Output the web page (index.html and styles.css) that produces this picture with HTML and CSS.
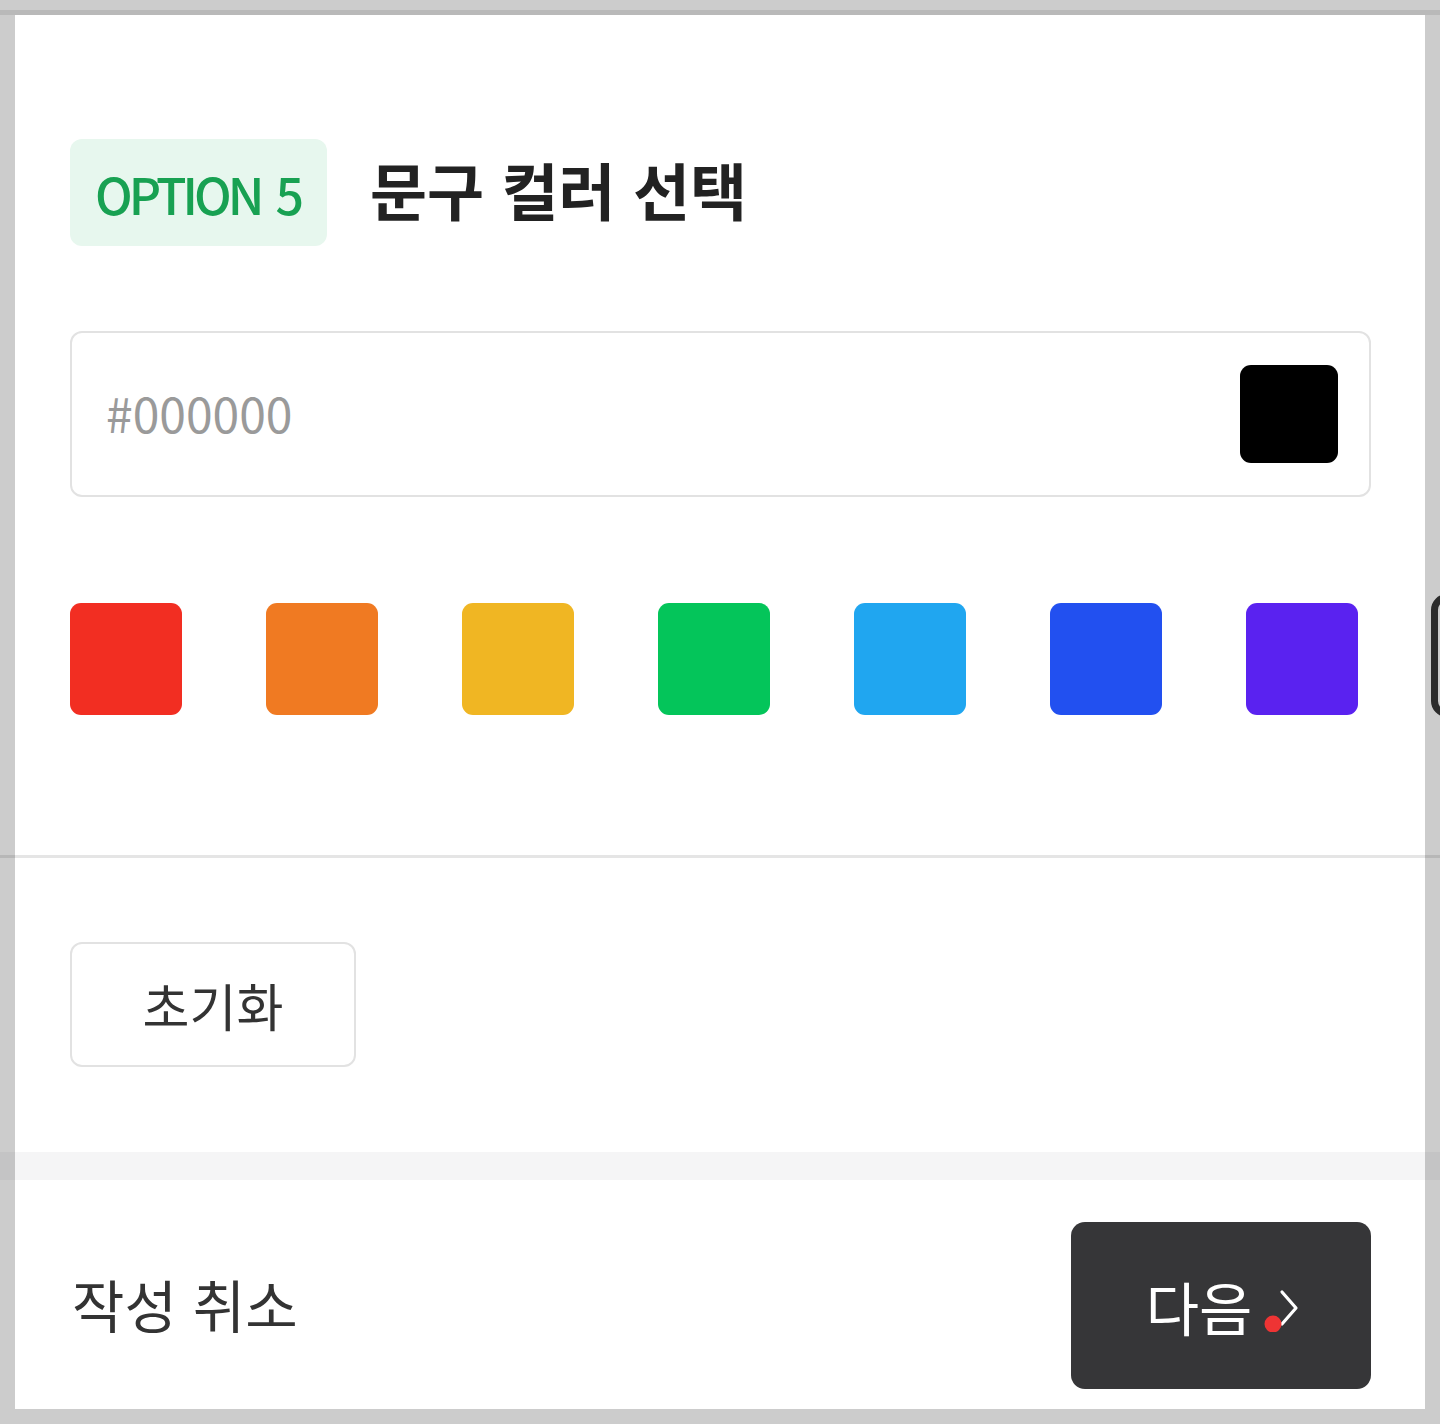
FILE: index.html
```html
<!DOCTYPE html>
<html lang="ko">
<head>
  <meta charset="UTF-8">
  <meta name="viewport" content="width=device-width, initial-scale=1.0">
  <title>문구 컬러 선택</title>
  <link rel="stylesheet" href="styles.css">
</head>
<body>
  <div class="top-line"></div>

  <div class="sheet">
    <!-- Option header -->
    <section class="option">
      <div class="option-head">
        <span class="badge">OPTION 5</span>
        <h1>문구 컬러 선택</h1>
      </div>

      <!-- Hex input with preview -->
      <div class="color-input">
        <input type="text" placeholder="#000000">
        <span class="preview"></span>
      </div>

      <!-- Preset colours -->
      <div class="swatches">
        <button class="swatch red"></button>
        <button class="swatch orange"></button>
        <button class="swatch yellow"></button>
        <button class="swatch green"></button>
        <button class="swatch sky"></button>
        <button class="swatch blue"></button>
        <button class="swatch purple"></button>
      </div>
    </section>

    <div class="divider"></div>

    <div class="reset-row">
      <button class="reset-button">초기화</button>
    </div>

    <div class="band"></div>

    <!-- Footer actions -->
    <footer class="actions">
      <button class="cancel">작성 취소</button>
      <button class="next">
        다음
        <span class="next-icon">
          <svg width="36" height="48" viewBox="0 0 36 48">
            <path d="M18 8 L32 24 L18 40" fill="none" stroke="#fff" stroke-width="3.2" stroke-linecap="round" stroke-linejoin="round"/>
            <circle cx="9" cy="40" r="8.5" fill="#ee3434"/>
          </svg>
        </span>
      </button>
    </footer>
  </div>

  <!-- edge of the selected swatch scrolled past the screen -->
  <div class="edge-swatch"></div>
</body>
</html>
```

FILE: styles.css
```css
* {
  margin: 0;
  padding: 0;
  box-sizing: border-box;
}

body {
  font-family: "Noto Sans CJK KR", "Noto Sans", sans-serif;
  background-color: #cccccc;
  width: 1440px;
  height: 1424px;
  padding-top: 10px;
  overflow: hidden;
  position: relative;
}

button {
  font-family: inherit;
  background: none;
  border: none;
  cursor: pointer;
}

.top-line {
  height: 5px;
  background-color: rgba(0, 0, 0, 0.09);
}

.sheet {
  margin: 0 15px;
  height: 1394px;
  background-color: #fff;
  display: flex;
  flex-direction: column;
}

.option {
  padding: 124px 54px 0 55px;
}

.option-head {
  display: flex;
  align-items: center;
  gap: 43px;
}

.badge {
  width: 257px;
  height: 107px;
  border-radius: 12px;
  background-color: #e7f7ee;
  color: #18a152;
  font-size: 50px;
  font-weight: 500;
  letter-spacing: -4px;
  word-spacing: 5px;
  display: flex;
  align-items: center;
  justify-content: center;
  padding-right: 2px;
}

.option-head h1 {
  font-size: 62px;
  font-weight: 700;
  color: #222;
  line-height: 1;
  padding-bottom: 8px;
}

.color-input {
  margin-top: 85px;
  height: 166px;
  border: 2px solid #e2e2e2;
  border-radius: 12px;
  display: flex;
  align-items: center;
  padding: 0 31px 0 34px;
}

.color-input input {
  flex: 1;
  border: none;
  outline: none;
  font-family: inherit;
  font-size: 48px;
  color: #333;
  background: transparent;
  margin-top: -4px;
}

.color-input input::placeholder {
  color: #9a9a9a;
}

.preview {
  width: 98px;
  height: 98px;
  border-radius: 11px;
  background-color: #000;
}

.swatches {
  margin-top: 106px;
  display: flex;
  gap: 84px;
}

.swatch {
  width: 112px;
  height: 112px;
  border-radius: 11px;
}

.swatch.red { background-color: #f22e22; }
.swatch.orange { background-color: #f07a22; }
.swatch.yellow { background-color: #f0b623; }
.swatch.green { background-color: #04c55a; }
.swatch.sky { background-color: #20a6f0; }
.swatch.blue { background-color: #2250f0; }
.swatch.purple { background-color: #5a22f0; }

.divider {
  margin: 140px -15px 0;
  height: 3px;
  background-color: rgba(0, 0, 0, 0.1);
}

.reset-row {
  padding: 84px 55px 0;
}

.reset-button {
  width: 286px;
  height: 125px;
  border: 2px solid #e2e2e2;
  border-radius: 12px;
  font-size: 51px;
  color: #333;
}

.band {
  margin: 85px -15px 0;
  height: 28px;
  background-color: rgba(0, 0, 30, 0.04);
}

.actions {
  padding: 42px 54px 0 56px;
  display: flex;
  justify-content: space-between;
  align-items: center;
}

.cancel {
  font-size: 57px;
  color: #333;
  padding-left: 1px;
  margin-top: -6px;
}

.next {
  width: 300px;
  height: 167px;
  border-radius: 14px;
  background-color: #363638;
  color: #fff;
  font-size: 58px;
  display: flex;
  align-items: center;
  justify-content: center;
  gap: 12px;
  padding-left: 4px;
}

.next-icon {
  display: flex;
  margin-top: 4px;
}

.edge-swatch {
  position: absolute;
  left: 1431px;
  top: 594px;
  width: 60px;
  height: 123px;
  border: 7px solid #2b2b2b;
  border-radius: 16px;
}
```
